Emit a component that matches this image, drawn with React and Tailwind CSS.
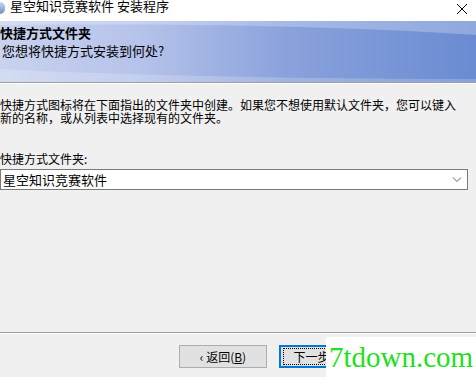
export default function App() {
  return (
    <div
      className="w-[476px] h-[377px] bg-[#f0f0f0] relative overflow-hidden"
      style={{ fontFamily: '"Noto Sans CJK SC", "Noto Sans", sans-serif' }}
    >
      {/* title bar */}
      <div className="h-[21px] bg-white flex items-start relative">
        <div className="w-[5px] h-[12px] mt-[2px] rounded-r-full bg-gradient-to-b from-[#c8d8f0] to-[#7090c0]" />
        <div className="ml-[5px] mt-[-4px] text-[13px] leading-[20px] text-black">星空知识竞赛软件 安装程序</div>
        <svg className="absolute left-[456px] top-[3px]" width="12" height="12" viewBox="0 0 12 12">
          <path d="M1 1 L11 11 M11 1 L1 11" stroke="#000" strokeWidth="1" />
        </svg>
      </div>
      {/* banner */}
      <div className="h-[61px] relative overflow-hidden bg-[linear-gradient(90deg,#c9d3ef_0%,#b5c2ea_30%,#8aa2dc_60%,#6a8bd2_100%)]">
        <svg className="absolute inset-0" width="476" height="61" viewBox="0 0 476 61" preserveAspectRatio="none">
          <path d="M0 0 L476 0 L476 14 C380 8 250 2 0 4 Z" fill="rgba(255,255,255,0.25)" />
          <path d="M0 48 C120 54 300 58 476 58 L476 61 L0 61 Z" fill="rgba(255,255,255,0.2)" />
        </svg>
        <div className="relative pt-[3px] pl-0 text-[13px] leading-[18px] font-bold text-black">快捷方式文件夹</div>
        <div className="relative pl-[2px] text-[13px] leading-[18px] text-black">您想将快捷方式安装到何处?</div>
      </div>
      <div className="h-[1px] bg-[#a0a0a0]" />
      <div className="h-[1px] bg-white" />
      {/* body */}
      <div className="pt-[14px] text-[12px] leading-[13px] text-black pr-[10px]">
        快捷方式图标将在下面指出的文件夹中创建。如果您不想使用默认文件夹，您可以键入新的名称，或从列表中选择现有的文件夹。
      </div>
      <div className="mt-[28px] text-[12px] leading-[14px] text-black">快捷方式文件夹:</div>
      <div className="mt-[3px] w-[468px] h-[21px] bg-white border border-[#7a7a7a] flex items-center justify-between">
        <span className="pl-[2px] text-[13px] leading-[18px] text-black">星空知识竞赛软件</span>
        <svg className="mr-[5px]" width="10" height="6" viewBox="0 0 10 6">
          <path d="M1 0.5 L5 4.5 L9 0.5" stroke="#606060" strokeWidth="1" fill="none" />
        </svg>
      </div>
      {/* separator */}
      <div className="mt-[142px] h-[1px] bg-[#a0a0a0]" />
      <div className="h-[1px] bg-white" />
      {/* buttons */}
      <div className="mt-[11px] flex">
        <div className="ml-[179px] w-[88px] h-[23px] bg-[#e1e1e1] border border-[#adadad] flex items-center justify-center text-[12px] text-black">
          ‹ 返回(<span className="underline">B</span>)
        </div>
        <div className="ml-[12px] w-[88px] h-[23px] bg-[#e1e1e1] border-2 border-[#0078d7] flex items-center justify-center text-[12px] text-black">
          <div className="w-[80px] h-[17px] border border-dotted border-black flex items-center justify-center">下一步(N) ›</div>
        </div>
      </div>
      {/* watermark */}
      <div className="absolute left-[326px] top-[337px] w-[150px] h-[40px] bg-white flex items-center justify-center">
        <span className="text-[29px] leading-[30px] text-[#1ee01e]" style={{ fontFamily: '"Liberation Serif", serif' }}>7tdown.com</span>
      </div>
    </div>
  );
}
